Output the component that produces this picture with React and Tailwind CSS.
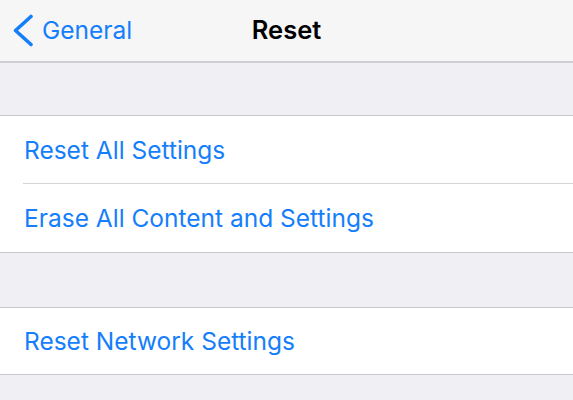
const font = { fontFamily: 'Inter, "Noto Sans", sans-serif' };

function Row({ label, divider }) {
  return (
    <div className="relative h-[68px] flex items-center pl-[24px] bg-white">
      <span className="text-[24.5px] text-[#157efb]">{label}</span>
      {divider && <div className="absolute left-[23px] right-0 bottom-0 h-px bg-[#d4d4d8]" />}
    </div>
  );
}

export default function App() {
  return (
    <div className="w-[573px] h-[400px] bg-[#efeff4] overflow-hidden" style={font}>
      <div className="relative h-[63px] bg-[#f6f6f7] border-b-[2px] border-[#cfcfd3] flex items-center">
        <div className="flex items-center pl-[12px] text-[#157efb]">
          <svg width="22" height="34" viewBox="0 0 22 34" fill="none">
            <path d="M19 2.5 L3.5 16.5 L19 30.5" stroke="#157efb" strokeWidth="3.6" strokeLinecap="round" strokeLinejoin="round" />
          </svg>
          <span className="ml-[8px] text-[24.5px]">General</span>
        </div>
        <div className="absolute inset-x-0 text-center text-[25.5px] font-semibold text-black pointer-events-none">
          Reset
        </div>
      </div>
      <div className="h-[52px]" />
      <div className="border-y border-[#c8c7cc]">
        <Row label="Reset All Settings" divider />
        <Row label="Erase All Content and Settings" />
      </div>
      <div className="h-[54px]" />
      <div className="border-y border-[#c8c7cc]">
        <div className="h-[66px] flex items-center pl-[24px] bg-white">
          <span className="text-[24.5px] text-[#157efb]">Reset Network Settings</span>
        </div>
      </div>
    </div>
  );
}
